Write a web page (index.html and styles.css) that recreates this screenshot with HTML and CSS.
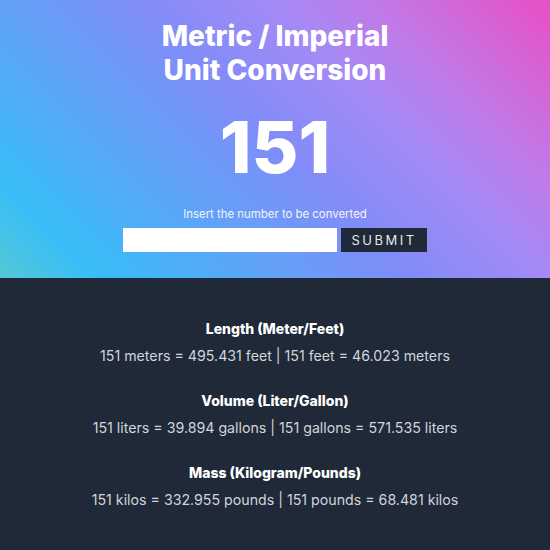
FILE: index.html
```html
<!DOCTYPE html>
<html>
<head>
<meta charset="utf-8">
<link rel="stylesheet" href="styles.css">
</head>
<body>
<header class="hero">
  <h1 class="title">Metric / Imperial<br>Unit Conversion</h1>
  <div class="number">151</div>
  <label class="label" for="num">Insert the number to be converted</label>
  <form class="form">
    <input id="num" class="input" type="text">
    <button class="btn" type="button">SUBMIT</button>
  </form>
</header>
<main class="results">
  <section class="block">
    <h2 class="heading">Length (Meter/Feet)</h2>
    <p class="values">151 meters = 495.431 feet | 151 feet = 46.023 meters</p>
  </section>
  <section class="block">
    <h2 class="heading">Volume (Liter/Gallon)</h2>
    <p class="values">151 liters = 39.894 gallons | 151 gallons = 571.535 liters</p>
  </section>
  <section class="block">
    <h2 class="heading">Mass (Kilogram/Pounds)</h2>
    <p class="values">151 kilos = 332.955 pounds | 151 pounds = 68.481 kilos</p>
  </section>
</main>
</body>
</html>
```
FILE: styles.css
```css
* { box-sizing: border-box; }
html, body { margin: 0; padding: 0; }
body {
  font-family: Inter, "Noto Sans", sans-serif;
  background: #1f2937;
  width: 550px;
  height: 550px;
  overflow: hidden;
}
.hero {
  height: 278px;
  background: linear-gradient(45deg, #55c8d8 0%, #38bdf8 12%, #818cf8 50%, #a48af6 66%, #c07ae8 78%, #e84fc5 100%);
  display: flex;
  flex-direction: column;
  align-items: center;
  padding-top: 19px;
  color: #fff;
}
.title {
  margin: 0;
  font-size: 28px;
  line-height: 34px;
  font-weight: 800;
  text-align: center;
}
.number {
  margin-top: 24px;
  font-size: 72px;
  line-height: 72px;
  font-weight: 800;
}
.label {
  margin-top: 24px;
  font-size: 11.4px;
  line-height: 14px;
  color: #f3f4f6;
}
.form {
  display: flex;
  gap: 4px;
  margin-top: 7px;
}
.input {
  width: 214px;
  height: 24px;
  border: 0;
  background: #fff;
  padding: 0 6px;
  font-family: inherit;
}
.btn {
  width: 86px;
  height: 24px;
  border: 0;
  background: #1f2937;
  color: #e5e7eb;
  font-family: inherit;
  font-size: 13px;
  letter-spacing: 2.5px;
  padding: 0;
}
.results {
  display: flex;
  flex-direction: column;
  align-items: center;
  gap: 27px;
  padding-top: 42px;
}
.block {
  text-align: center;
}
.heading {
  margin: 0;
  font-size: 14px;
  line-height: 18px;
  font-weight: 800;
  color: #fff;
}
.values {
  margin: 9px 0 0;
  font-size: 14.2px;
  line-height: 18px;
  color: #d1d5db;
}
```
